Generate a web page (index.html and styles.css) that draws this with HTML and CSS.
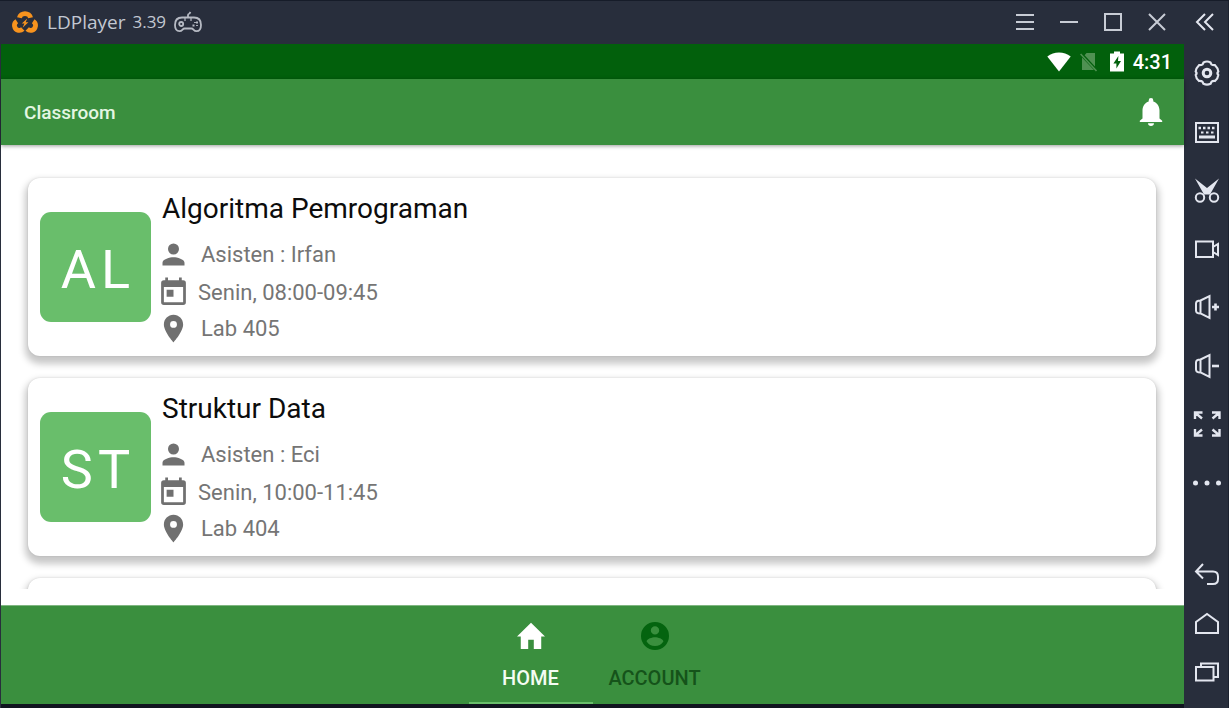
FILE: index.html
```html
<!DOCTYPE html>
<html lang="id">
<head>
<meta charset="utf-8">
<meta name="viewport" content="width=device-width, initial-scale=1">
<title>LDPlayer</title>
<link rel="stylesheet" href="styles.css">
</head>
<body>
<div class="window">
  <div class="stage">
    <header class="titlebar">
      <svg class="logo" viewBox="0 0 26 24" aria-hidden="true">
        <g fill="none" stroke="#f7931e" stroke-width="4.8">
          <path d="M7.400 7.800A5.700 5.200 0 0 1 18.600 7.800"/>
          <path d="M4.800 11.200A5 5 0 0 0 6.400 20.300Q9 20.800 10.800 19"/>
          <path d="M21.200 11.200A5 5 0 0 1 19.600 20.300Q17 20.800 15.200 19"/>
        </g>
        <path d="M15.200 8.400L9.800 13.600H12.400L10.600 17.800L16.400 12.200H13.700Z" fill="#f7931e"/>
      </svg>
      <span class="app-name">LDPlayer</span>
      <span class="app-version">3.39</span>
      <svg class="gamepad" viewBox="0 0 28 22" fill="none" stroke="#b6bac3" stroke-width="1.8" aria-hidden="true">
        <path d="M14 6.500V4Q14 3 15.500 2.500L16.500 1"/>
        <path d="M8 6.500H20C25 6.500 27 10 27 14C27 18 25.500 20.200 22.500 20.200C19.500 20.200 19.500 17.500 17.500 17.500H10.500C8.500 17.500 8.500 20.200 5.500 20.200C2.500 20.200 1 18 1 14C1 10 3 6.500 8 6.500Z"/>
        <circle cx="7.200" cy="13" r="2"/>
        <path d="M11 7V10M17 7V10" stroke-width="1.200"/>
        <path d="M18.500 14.500h2M22 11.500h2M21 11v1M23 14v1"/>
      </svg>
      <div class="window-controls">
        <button type="button" aria-label="Menu"><svg viewBox="0 0 18 18"><path d="M0 2H18M0 9H18M0 16H18"/></svg></button>
        <button type="button" aria-label="Minimize"><svg viewBox="0 0 18 18"><path d="M0 9H18"/></svg></button>
        <button type="button" aria-label="Maximize"><svg viewBox="0 0 18 18"><path d="M1 1H17V17H1Z"/></svg></button>
        <button type="button" aria-label="Close"><svg viewBox="0 0 18 18"><path d="M1 1L17 17M17 1L1 17"/></svg></button>
      </div>
    </header>

    <div class="statusbar">
      <svg class="wifi" viewBox="0 0 24 20" aria-hidden="true"><path d="M12 19.500L.3 4.600Q5.500 .6 12 .6T23.700 4.600Z" fill="#fff"/></svg>
      <svg class="no-sim" viewBox="0 0 18 20" aria-hidden="true"><path d="M6.500 1H15V14.500L4.600 3.200ZM2 5.500L14 18H2Z" fill="#4f9152"/><path d="M.6 2L16.500 19" stroke="#4f9152" stroke-width="1.600"/></svg>
      <svg class="battery" viewBox="0 0 14 21" aria-hidden="true"><path fill="#fff" fill-rule="evenodd" d="M4 .5H10V2.500H14V20.500H0V2.500H4ZM8.400 5L3.400 12.500H6.400V17.500L11 10H8Z"/></svg>
      <time class="clock">4:31</time>
    </div>

    <div class="appbar">
      <h1 class="appbar-title">Classroom</h1>
      <button class="bell" type="button" aria-label="Notifications">
        <svg viewBox="0 0 24 28"><path fill="#fff" d="M12 28a3 3 0 0 0 3-2.800H9A3 3 0 0 0 12 28ZM20.500 20.500V12.500C20.500 8 18 4.500 14.300 3.400V2.400a2.300 2.300 0 0 0-4.600 0V3.400C6 4.500 3.500 8 3.500 12.500V20.500L.8 22.800V24H23.200V22.800Z"/></svg>
      </button>
    </div>

    <main class="classes">
      <article class="card">
        <div class="avatar">AL</div>
        <div class="details">
          <h2 class="course">Algoritma Pemrograman</h2>
          <p class="row"><svg class="icon" viewBox="0 0 24 24"><path d="M12 12a4 4 0 1 0 0-8 4 4 0 0 0 0 8zm0 2c-2.670 0-8 1.340-8 4v2h16v-2c0-2.660-5.330-4-8-4z"/></svg>Asisten : Irfan</p>
          <p class="row row-time"><svg class="icon" viewBox="0 0 24 24"><path d="M19 3h-1V1h-2v2H8V1H6v2H5a2 2 0 0 0-2 2v14a2 2 0 0 0 2 2h14a2 2 0 0 0 2-2V5a2 2 0 0 0-2-2zm0 16H5V8h14v11zM7 10h5v5H7z"/></svg>Senin, 08:00-09:45</p>
          <p class="row row-place"><svg class="icon" viewBox="0 0 24 24"><path d="M12 2C8.130 2 5 5.130 5 9c0 5.250 7 13 7 13s7-7.750 7-13c0-3.870-3.130-7-7-7zm0 9.500a2.500 2.500 0 1 1 0-5 2.500 2.500 0 0 1 0 5z"/></svg>Lab 405</p>
        </div>
      </article>
      <article class="card">
        <div class="avatar">ST</div>
        <div class="details">
          <h2 class="course">Struktur Data</h2>
          <p class="row"><svg class="icon" viewBox="0 0 24 24"><path d="M12 12a4 4 0 1 0 0-8 4 4 0 0 0 0 8zm0 2c-2.670 0-8 1.340-8 4v2h16v-2c0-2.660-5.330-4-8-4z"/></svg>Asisten : Eci</p>
          <p class="row row-time"><svg class="icon" viewBox="0 0 24 24"><path d="M19 3h-1V1h-2v2H8V1H6v2H5a2 2 0 0 0-2 2v14a2 2 0 0 0 2 2h14a2 2 0 0 0 2-2V5a2 2 0 0 0-2-2zm0 16H5V8h14v11zM7 10h5v5H7z"/></svg>Senin, 10:00-11:45</p>
          <p class="row row-place"><svg class="icon" viewBox="0 0 24 24"><path d="M12 2C8.130 2 5 5.130 5 9c0 5.250 7 13 7 13s7-7.750 7-13c0-3.870-3.130-7-7-7zm0 9.500a2.500 2.500 0 1 1 0-5 2.500 2.500 0 0 1 0 5z"/></svg>Lab 404</p>
        </div>
      </article>
      <article class="card"></article>
    </main>

    <nav class="tabs">
      <button class="tab tab-active" type="button">
        <svg viewBox="0 0 26 26"><path fill="#fff" d="M10.400 25V16.500H15.600V25H22.500V13.500H26L13 .8 0 13.500H3.500V25Z"/></svg>
        HOME
      </button>
      <button class="tab" type="button">
        <svg viewBox="2 2 20 20"><path fill="#04640f" d="M12 2a10 10 0 1 0 0 20 10 10 0 0 0 0-20zm0 3a3 3 0 1 1 0 6 3 3 0 0 1 0-6zm0 14.200a7.200 7.200 0 0 1-6-3.220c.03-1.990 4-3.080 6-3.080s5.970 1.090 6 3.080a7.200 7.200 0 0 1-6 3.220z"/></svg>
        ACCOUNT
      </button>
    </nav>
  </div>

  <aside class="sidebar">
    <button class="collapse" type="button" aria-label="Collapse"><svg viewBox="0 0 28 28"><path d="M12 5L4 13L12 21M20 5L12 13L20 21"/></svg></button>
    <div class="tools">
      <button type="button" aria-label="Settings"><svg viewBox="0 0 28 28"><path stroke-width="2.200" d="M10.500 3.500Q14 1.500 17.500 3.500L18.500 5.500Q19.500 6.300 22 6.200Q25 9 25.300 12.500Q23.600 14 25.300 16Q25 19.500 22 22Q19.500 21.800 18.500 22.800L17.500 24.800Q14 26.500 10.500 24.800L9.500 22.800Q8.500 21.800 6 22Q3 19.500 2.700 16Q4.400 14 2.700 12.500Q3 9 6 6.200Q8.500 6.300 9.500 5.500Z"/><circle cx="14" cy="14" r="3.800" stroke-width="3"/></svg></button>
      <button type="button" aria-label="Keyboard"><svg viewBox="0 0 28 28"><path d="M3 5H25V24H3Z"/><path stroke-dasharray="2.500 2" stroke-width="2.400" d="M5.500 10H23"/><path stroke-dasharray="2.500 2.500" stroke-width="2.200" d="M8 14.500H21"/><path d="M6 19H22" stroke-width="3"/></svg></button>
      <button type="button" aria-label="Screenshot"><svg viewBox="0 0 28 28"><circle cx="7" cy="21.500" r="4.200"/><circle cx="21" cy="21.500" r="4.200"/><path d="M2 2.500L14 12L26 2.500L17 18.500H11Z" fill="#e3e6ef" stroke="none"/></svg></button>
      <button type="button" aria-label="Record"><svg viewBox="0 0 28 28"><path d="M3 6.500H20V22H3ZM20 12L25 9V20L20 17"/></svg></button>
      <button type="button" aria-label="Volume up"><svg viewBox="0 0 28 28"><path d="M7.500 7.500L16.500 3V25L7.500 20.500ZM7.500 7.500Q3 7.500 3 10.500V17.500Q3 20.500 7.500 20.500"/><path d="M19 14H26M22.500 10.500V17.500" stroke-width="2.600"/></svg></button>
      <button type="button" aria-label="Volume down"><svg viewBox="0 0 28 28"><path d="M7.500 7.500L16.500 3V25L7.500 20.500ZM7.500 7.500Q3 7.500 3 10.500V17.500Q3 20.500 7.500 20.500"/><path d="M19 14H26" stroke-width="2.600"/></svg></button>
      <button type="button" aria-label="Full screen"><svg viewBox="0 0 28 28"><path stroke-width="2.400" d="M9.500 2.500H2V9M2 2.500L9 8.500M19 2.500H26.500V9M26.500 2.500L19.500 8.500M2 19V25.500H9.500M2 25.500L9 19.500M26.500 19V25.500H19M26.500 25.500L19.500 19.500"/></svg></button>
      <button type="button" aria-label="More"><svg viewBox="0 0 28 28"><g fill="#e3e6ef" stroke="none"><circle cx="2.500" cy="14" r="2.500"/><circle cx="14" cy="14" r="2.500"/><circle cx="25.500" cy="14" r="2.500"/></g></svg></button>
    </div>
    <div class="keys">
      <button type="button" aria-label="Back"><svg viewBox="0 0 28 28"><path d="M10 3L3 10.500L10 17.500M3 10.500H20Q25 10.500 25 15.500V18Q25 23 20 23H14"/></svg></button>
      <button type="button" aria-label="Home"><svg viewBox="0 0 28 28"><path d="M3 23V12L14 4L25 12V23Z"/></svg></button>
      <button type="button" aria-label="Recent apps"><svg viewBox="0 0 28 28"><path d="M3 8H20.500V21.500H3ZM8 8V4.500H25V18H20.500"/></svg></button>
    </div>
  </aside>
</div>
</body>
</html>
```
FILE: styles.css
```css
* { box-sizing: border-box; }

body {
  margin: 0;
  background: #161c29;
  font-family: Roboto, "Liberation Sans", sans-serif;
}

h1, h2, p { margin: 0; font-weight: 400; }

button {
  margin: 0;
  padding: 0;
  border: 0;
  background: none;
  font-family: inherit;
  cursor: pointer;
}

svg { display: block; flex: none; }

.window {
  display: flex;
  height: 100vh;
  padding-left: 1px;
  border-top: 1px solid #161c29;
  background: #282e3c;
}

.stage {
  flex: 1;
  min-width: 0;
  display: flex;
  flex-direction: column;
  border-bottom: 4px solid #10141f;
}

/* Emulator title bar */
.titlebar {
  flex: none;
  display: flex;
  align-items: center;
  height: 43px;
  padding: 0 18px 2px 11px;
  color: #c3c8d2;
  font-family: "Open Sans", "Noto Sans", sans-serif;
}

.logo { width: 26px; height: 24px; }
.app-name { margin-left: 9px; font-size: 19px; }
.app-version { margin-left: 7px; font-size: 17px; }
.gamepad { width: 28px; height: 22px; margin-left: 8px; }

.window-controls { display: flex; gap: 26px; margin-left: auto; }
.window-controls svg {
  width: 18px;
  height: 18px;
  fill: none;
  stroke: #c8ccd5;
  stroke-width: 2;
}

/* Android status bar */
.statusbar {
  flex: none;
  display: flex;
  align-items: center;
  justify-content: flex-end;
  height: 35px;
  padding-right: 12px;
  background: #02600c;
  color: #fff;
}

.wifi { width: 24px; height: 20px; }
.no-sim { width: 18px; height: 20px; margin-left: 9px; }
.battery { width: 14px; height: 21px; margin-left: 12px; }
.clock { margin-left: 9px; font-size: 20px; font-weight: 500; }

/* App bar */
.appbar {
  z-index: 1;
  flex: none;
  display: flex;
  align-items: center;
  justify-content: space-between;
  height: 66px;
  padding: 0 21px 0 23px;
  background: #3a8f3e;
  box-shadow: 0 1px 4px rgba(0, 0, 0, 0.4);
}

.appbar-title { color: #e4f6e2; font-size: 19px; font-weight: 500; }
.bell svg { width: 24px; height: 28px; }

/* Class list */
.classes {
  flex: 1;
  min-height: 0;
  display: flex;
  flex-direction: column;
  gap: 22px;
  padding: 33px 28px 0 27px;
  overflow: hidden;
  background: #fff;
}

.card {
  flex: none;
  display: flex;
  align-items: center;
  min-height: 178px;
  padding: 0 12px;
  border-radius: 12px;
  background: #fff;
  box-shadow: 0 5px 7px 3px rgba(0, 0, 0, 0.22), 0 0 2px rgba(0, 0, 0, 0.12);
}

.avatar {
  flex: none;
  display: flex;
  align-items: center;
  justify-content: center;
  width: 111px;
  height: 110px;
  padding: 5px 0 0 5px;
  border-radius: 11px;
  background: #69be6b;
  color: #fff;
  font-size: 54px;
  letter-spacing: 5px;
}

.details { padding: 3px 0 0 6px; }
.course { padding-left: 5px; color: #0c0c0c; font-size: 28px; line-height: 34px; margin-bottom: 9px; }

.row {
  display: flex;
  align-items: center;
  gap: 11px;
  height: 38px;
  color: #757575;
  font-size: 22px;
}

.row-time { gap: 8px; }
.row-place { height: 34px; }
.icon { width: 33px; height: 33px; fill: #707070; }

/* Bottom tabs */
.tabs {
  flex: none;
  display: flex;
  justify-content: center;
  height: 99px;
  border-top: 1px solid #7fb681;
  background: #3a8f3e;
  box-shadow: 0 -16px 0 #fff;
  z-index: 1;
}

.tab {
  display: flex;
  flex-direction: column;
  align-items: center;
  gap: 16px;
  width: 124px;
  padding-top: 16px;
  border-bottom: 2px solid transparent;
  color: #15531a;
  font-size: 20px;
  font-weight: 500;
}

.tab-active { border-bottom-color: #69be6b; color: #f4fcf2; }
.tab svg { width: 28px; height: 28px; }

/* Emulator tool strip */
.sidebar {
  flex: none;
  display: flex;
  flex-direction: column;
  width: 45px;
  padding: 0 0 12px 2px;
  border-right: 1px solid #1c222f;
}

.sidebar button {
  display: flex;
  align-items: center;
  justify-content: center;
  width: 100%;
}

.sidebar svg {
  width: 28px;
  height: 28px;
  fill: none;
  stroke: #e3e6ef;
  stroke-width: 2;
}

.collapse { height: 43px; }

.tools {
  display: flex;
  flex-direction: column;
  justify-content: space-between;
  height: 453px;
  padding-top: 15px;
}

.keys {
  display: flex;
  flex-direction: column;
  gap: 21px;
  margin-top: auto;
  padding-bottom: 9px;
}
```
